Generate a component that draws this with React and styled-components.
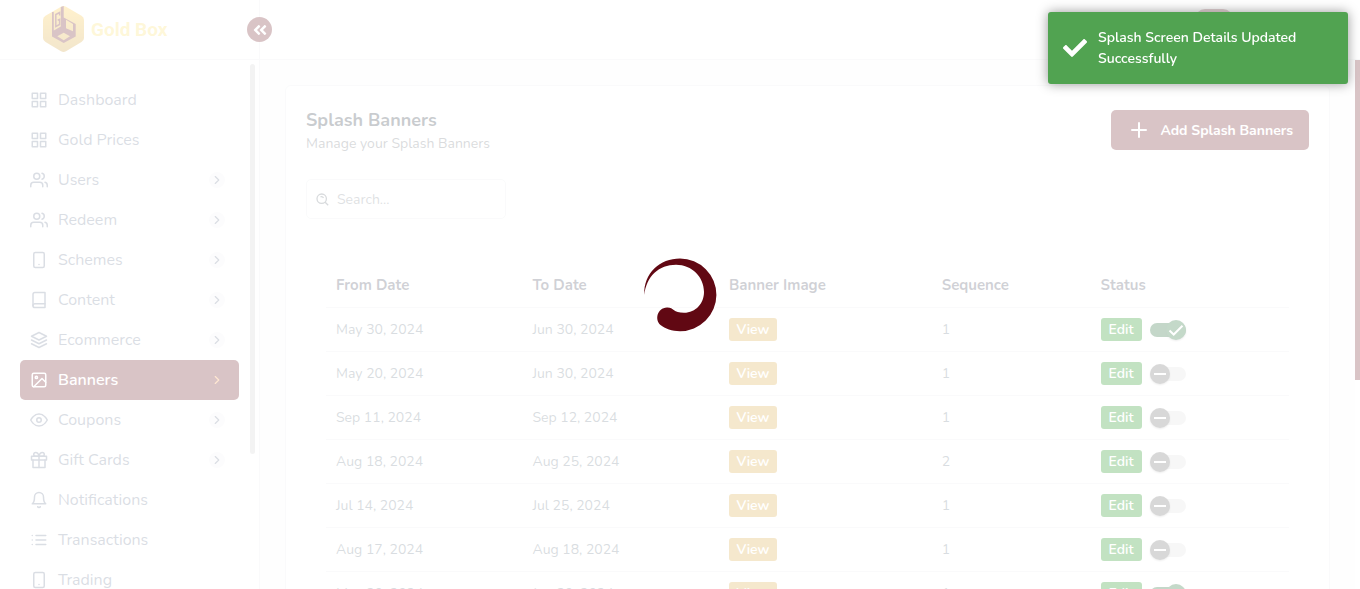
import React from 'react';
import styled, { createGlobalStyle, css } from 'styled-components';
import {
  FiGrid, FiUsers, FiSmartphone, FiBook, FiLayers, FiImage, FiEye, FiGift,
  FiBell, FiList, FiPlus, FiChevronRight,
} from 'react-icons/fi';
import { FaAngleDoubleLeft, FaCheck } from 'react-icons/fa';

const maroon = '#630a14';
const line = '#e8ebed';

const GlobalStyle = createGlobalStyle`
  *, *::before, *::after { box-sizing: border-box; }
  body {
    margin: 0;
    overflow: hidden;
    background: #f9f9fa;
    color: #212b36;
    font-family: Nunito, Lato, "Liberation Sans", sans-serif;
    font-size: 14px;
  }
  button, input { font: inherit; }
  h1, p, ul { margin: 0; padding: 0; }
`;

const Page = styled.div`
  height: 100vh;
  display: flex;
  flex-direction: column;
  overflow: hidden;
`;

const Header = styled.header`
  flex: none;
  height: 60px;
  display: flex;
  justify-content: space-between;
  background: #fff;
  border-bottom: 1px solid ${line};
`;

const Brand = styled.div`
  position: relative;
  width: 260px;
  display: flex;
  align-items: center;
  padding-left: 43px;
  border-right: 1px solid ${line};
`;

const BrandLink = styled.a`
  display: flex;
  align-items: center;
  gap: 7px;
  color: #f8dd60;
  font: 700 19px/24px Roboto, sans-serif;
  text-decoration: none;
`;

const CollapseButton = styled.button`
  position: absolute;
  right: -13px;
  top: 17px;
  width: 25px;
  height: 25px;
  display: grid;
  place-items: center;
  padding: 0;
  border: 0;
  border-radius: 50%;
  background: ${maroon};
  color: #fff;
`;

const Avatar = styled.button`
  width: 38px;
  height: 38px;
  margin: 9px 127px 0 0;
  border: 0;
  border-radius: 10px;
  background: ${maroon};
`;

const Body = styled.div`
  flex: 1;
  min-height: 0;
  display: flex;
`;

const Sidebar = styled.nav`
  flex: none;
  width: 260px;
  display: flex;
  justify-content: space-between;
  overflow: hidden;
  background: #fff;
  border-right: 1px solid ${line};
`;

const Menu = styled.ul`
  width: 239px;
  padding: 20px 0 0 20px;
  list-style: none;
`;

const MenuLink = styled.a`
  height: 40px;
  display: flex;
  align-items: center;
  gap: 10px;
  padding: 0 14px 0 10px;
  border-radius: 5px;
  color: #67748e;
  font-size: 16px;
  text-decoration: none;
  ${(p) => p.$active && css`
    background: ${maroon};
    color: #fff;
    font-weight: 600;
  `}
`;

const MenuLabel = styled.span`
  flex: 1;
`;

const Arrow = styled.span`
  width: 16px;
  height: 16px;
  display: grid;
  place-items: center;
  border-radius: 50%;
  background: ${(p) => (p.$active ? 'transparent' : '#f2f2f4')};
  color: ${(p) => (p.$active ? '#ff9f43' : 'inherit')};
`;

const SideThumb = styled.div`
  width: 5px;
  height: 390px;
  margin: 4px 4px 0 0;
  border-radius: 3px;
  background: #cdcdcd;
`;

const Main = styled.main`
  flex: 1;
  min-width: 0;
  padding: 25px 25px 0;
  overflow: hidden;
`;

const PageTrack = styled.div`
  flex: none;
  width: 5px;
  background: #fff;
`;

const PageThumb = styled.div`
  height: 320px;
  background: ${maroon};
`;

const Card = styled.section`
  padding: 24px 20px;
  border: 1px solid ${line};
  border-radius: 6px;
  background: #fff;
`;

const CardHead = styled.div`
  display: flex;
  justify-content: space-between;
  align-items: flex-start;
`;

const Title = styled.h1`
  font-size: 18px;
  font-weight: 700;
  line-height: 20px;
`;

const Subtitle = styled.p`
  margin-top: 4px;
  color: #646b72;
  line-height: 20px;
`;

const AddButton = styled.button`
  height: 40px;
  display: flex;
  align-items: center;
  gap: 9px;
  padding: 0 16px;
  border: 0;
  border-radius: 5px;
  background: ${maroon};
  color: #fff;
  font-weight: 700;
`;

const SearchBox = styled.label`
  width: 200px;
  height: 40px;
  display: flex;
  align-items: center;
  gap: 8px;
  margin-top: 25px;
  padding: 0 9px;
  border: 1px solid ${line};
  border-radius: 5px;
  color: #5b6670;
`;

const SearchInput = styled.input`
  flex: 1;
  min-width: 0;
  padding: 0;
  border: 0;
  outline: 0;
  background: transparent;
  color: inherit;
  &::placeholder { color: #7a828a; opacity: 1; }
`;

const TableWrap = styled.div`
  padding: 44px 20px 0;
`;

const Table = styled.table`
  width: 100%;
  border-collapse: collapse;
  table-layout: fixed;
`;

const Col = styled.col`
  width: ${(p) => p.$share}%;
`;

const Th = styled.th`
  height: 44px;
  padding: 0 10px;
  border-bottom: 1px solid ${line};
  color: #3c3f54;
  font-size: 15px;
  font-weight: 700;
  text-align: left;
`;

const Td = styled.td`
  height: 44px;
  padding: 0 10px;
  border-bottom: 1px solid ${line};
  color: #637381;
`;

const Actions = styled.div`
  display: flex;
  align-items: center;
  gap: 8px;
`;

const TagButton = styled.button`
  display: block;
  width: ${(p) => (p.$kind === 'view' ? 48 : 41)}px;
  height: 23px;
  padding: 0;
  border: 0;
  border-radius: 3px;
  background: ${(p) => (p.$kind === 'view' ? '#d59f30' : '#028802')};
  color: #fff;
  font-weight: 600;
  line-height: 23px;
`;

const Switch = styled.label`
  width: 36px;
  height: 20px;
  display: grid;
  align-items: center;
  margin-top: 2px;
  > * { grid-area: 1 / 1; }
`;

const SwitchInput = styled.input`
  appearance: none;
  width: 36px;
  height: 14px;
  margin: 0;
  border-radius: 7px;
  background: #dedede;
  &:checked { background: #0a5a20; }
`;

const Knob = styled.span`
  width: 20px;
  height: 20px;
  border-radius: 50%;
  background: #5e5e5e;
  box-shadow: 0 1px 2px rgba(0, 0, 0, 0.3);
  pointer-events: none;
  svg { display: block; }
  ${SwitchInput}:checked + & {
    justify-self: end;
    background: #0a6020;
  }
`;

const LoadingOverlay = styled.div`
  position: fixed;
  inset: 0;
  z-index: 10;
  display: grid;
  place-items: center;
  background: rgba(255, 255, 255, 0.76);
`;

const Toast = styled.div`
  position: fixed;
  top: 12px;
  right: 12px;
  z-index: 20;
  width: 300px;
  display: flex;
  align-items: center;
  gap: 11px;
  padding: 15px;
  border-radius: 3px;
  background: #51a351;
  box-shadow: 0 0 12px #999;
  color: #fff;
  font-weight: 600;
  line-height: 21px;
  svg { flex: none; }
`;

const menu = [
  ['Dashboard', FiGrid, false],
  ['Gold Prices', FiGrid, false],
  ['Users', FiUsers, true],
  ['Redeem', FiUsers, true],
  ['Schemes', FiSmartphone, true],
  ['Content', FiBook, true],
  ['Ecommerce', FiLayers, true],
  ['Banners', FiImage, true],
  ['Coupons', FiEye, true],
  ['Gift Cards', FiGift, true],
  ['Notifications', FiBell, false],
  ['Transactions', FiList, false],
  ['Trading', FiSmartphone, false],
];

const banners = [
  ['May 30, 2024', 'Jun 30, 2024', 1, true],
  ['May 20, 2024', 'Jun 30, 2024', 1, false],
  ['Sep 11, 2024', 'Sep 12, 2024', 1, false],
  ['Aug 18, 2024', 'Aug 25, 2024', 2, false],
  ['Jul 14, 2024', 'Jul 25, 2024', 1, false],
  ['Aug 17, 2024', 'Aug 18, 2024', 1, false],
  ['May 20, 2024', 'Jun 30, 2024', 1, true],
];

function Logo() {
  return (
    <svg width="41" height="48" viewBox="0 0 41 48" aria-hidden="true">
      <defs>
        <linearGradient id="gold" x1="0" y1="0" x2="0" y2="1">
          <stop offset="0" stopColor="#ffc52e" />
          <stop offset="1" stopColor="#c9962c" />
        </linearGradient>
      </defs>
      <path d="M18 .7Q20.500 -.7 23 .7L38.500 9.700Q41 11.200 41 14V32Q41 34.500 38.500 36L23 45.200Q20.500 46.600 18 45.200L2.500 36Q0 34.500 0 32V14Q0 11.200 2.500 9.700Z" fill="url(#gold)" />
      <path
        fill={maroon}
        fillRule="evenodd"
        d="M9 6H10.800V24.500L17.800 20.500V1L20.700 0V11.500L32.700 18V30.500L20.700 37L9 30.500ZM23 13.700L30 18V25.300L23 22.300ZM14.300 30.300L20.700 26.700L27 30.300L20.700 34.300Z"
      />
      <path d="M16.600 9.500V6.500L12.800 8.500V20.500L16.600 18.500V13.500L14.700 14.300" fill="none" stroke={maroon} strokeWidth="1.500" />
    </svg>
  );
}

function Spinner() {
  return (
    <svg width="80" height="80" viewBox="0 0 80 80" role="img" aria-label="Loading">
      <path
        fill="#610813"
        d="M4.300 40C3.500 18 20 3.500 40 3.500A36.400 36.400 0 0 1 76.400 40A36.400 36.400 0 0 1 40 76.200C32 76.200 25 73.500 20.500 70C14.500 65 17 53 27 52.500C34 52.300 33 57.800 44 57.800C56 57.800 64 48 64 37C64 22 52 9.700 36 9.700C19 9.700 6.500 21 4.300 40Z"
      />
    </svg>
  );
}

function SearchIcon() {
  return (
    <svg width="13" height="13" viewBox="0 0 13 13" fill="none" stroke="currentColor" strokeWidth="1.300" aria-hidden="true">
      <circle cx="5.700" cy="5.700" r="4.700" />
      <path d="M9.200 9.200L12.200 12.200M4.500 3.800Q6.500 3 7.500 5" />
    </svg>
  );
}

function StatusSwitch({ on, label }) {
  return (
    <Switch>
      <SwitchInput type="checkbox" defaultChecked={on} aria-label={label} />
      <Knob>
        <svg width="20" height="20" viewBox="0 0 20 20" fill="none" stroke="#fff" strokeWidth="2" aria-hidden="true">
          <path d={on ? 'M3.500 10.500L7.700 14.500L16.500 5.700' : 'M4 10H16'} />
        </svg>
      </Knob>
    </Switch>
  );
}

export default function App() {
  return (
    <>
      <GlobalStyle />
      <Page>
        <Header>
          <Brand>
            <BrandLink href="#home"><Logo />Gold Box</BrandLink>
            <CollapseButton type="button" aria-label="Collapse menu"><FaAngleDoubleLeft size={16} /></CollapseButton>
          </Brand>
          <Avatar type="button" aria-label="Profile" />
        </Header>
        <Body>
          <Sidebar>
            <Menu>
              {menu.map(([label, Icon, nested]) => {
                const active = label === 'Banners';
                return (
                  <li key={label}>
                    <MenuLink href="#menu" $active={active}>
                      <Icon size={18} />
                      <MenuLabel>{label}</MenuLabel>
                      {nested && <Arrow $active={active}><FiChevronRight size={14} /></Arrow>}
                    </MenuLink>
                  </li>
                );
              })}
            </Menu>
            <SideThumb />
          </Sidebar>
          <Main>
            <Card>
              <CardHead>
                <div>
                  <Title>Splash Banners</Title>
                  <Subtitle>Manage your Splash Banners</Subtitle>
                </div>
                <AddButton type="button"><FiPlus size={24} />Add Splash Banners</AddButton>
              </CardHead>
              <SearchBox>
                <SearchIcon />
                <SearchInput type="text" placeholder="Search..." aria-label="Search" />
              </SearchBox>
              <TableWrap>
                <Table>
                  <colgroup>
                    <Col $share={20.4} />
                    <Col $share={20.4} />
                    <Col $share={22.1} />
                    <Col $share={16.5} />
                    <Col $share={20.6} />
                  </colgroup>
                  <thead>
                    <tr>
                      <Th>From Date</Th>
                      <Th>To Date</Th>
                      <Th>Banner Image</Th>
                      <Th>Sequence</Th>
                      <Th>Status</Th>
                    </tr>
                  </thead>
                  <tbody>
                    {banners.map(([from, to, sequence, on], i) => (
                      <tr key={i}>
                        <Td>{from}</Td>
                        <Td>{to}</Td>
                        <Td><TagButton type="button" $kind="view">View</TagButton></Td>
                        <Td>{sequence}</Td>
                        <Td>
                          <Actions>
                            <TagButton type="button" $kind="edit">Edit</TagButton>
                            <StatusSwitch on={on} label={`Banner ${i + 1} active`} />
                          </Actions>
                        </Td>
                      </tr>
                    ))}
                  </tbody>
                </Table>
              </TableWrap>
            </Card>
          </Main>
          <PageTrack><PageThumb /></PageTrack>
        </Body>
      </Page>
      <LoadingOverlay><Spinner /></LoadingOverlay>
      <Toast role="status">
        <FaCheck size={24} />
        <span>Splash Screen Details Updated Successfully</span>
      </Toast>
    </>
  );
}
